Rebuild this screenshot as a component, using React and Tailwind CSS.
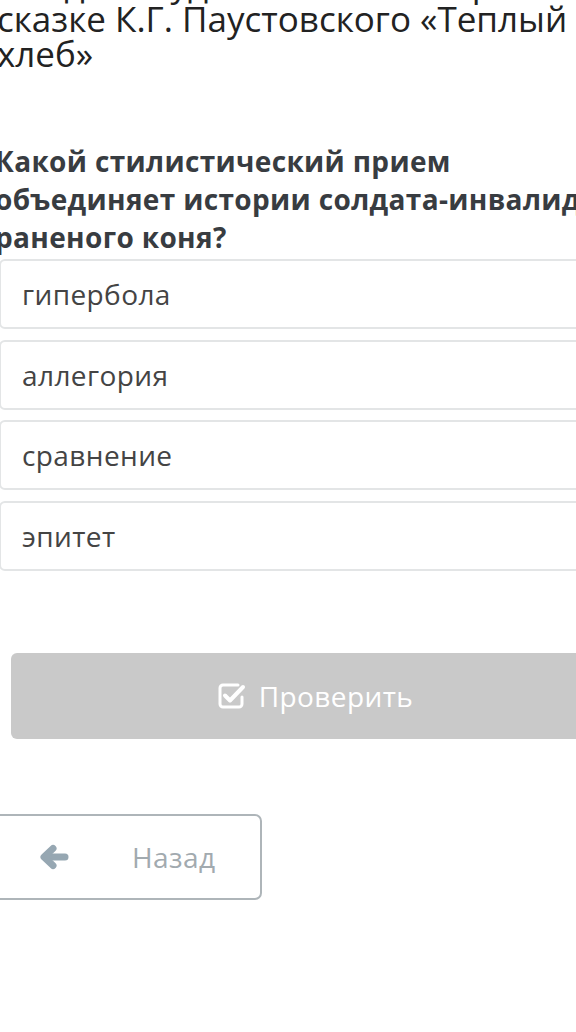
import React from "react";

function CheckSquare() {
  return (
    <svg width="29" height="28" viewBox="0 0 29 28" fill="none">
      <path
        d="M21 3H6a3 3 0 0 0-3 3v16a3 3 0 0 0 3 3h16a3 3 0 0 0 3-3V15"
        stroke="white"
        strokeWidth="3"
        strokeLinecap="round"
        strokeLinejoin="round"
      />
      <path
        d="M8 13.5l5 5L26 5"
        stroke="white"
        strokeWidth="4"
        strokeLinecap="round"
        strokeLinejoin="round"
      />
    </svg>
  );
}

function ArrowLeft() {
  return (
    <svg width="30" height="26" viewBox="0 0 30 26" fill="none">
      <path d="M26 13H7" stroke="#96a7b2" strokeWidth="7" strokeLinecap="round" />
      <path
        d="M14 4.5L5 13l9 8.5"
        stroke="#96a7b2"
        strokeWidth="7"
        strokeLinecap="round"
        strokeLinejoin="round"
      />
    </svg>
  );
}

export default function App() {
  const options = ["гипербола", "аллегория", "сравнение", "эпитет"];
  return (
    <div
      className="w-[576px] h-[1032px] overflow-hidden bg-white"
      style={{ fontFamily: '"Open Sans", "Noto Sans", sans-serif' }}
    >
      <div className="ml-[-3px] w-[700px]">
        <div className="mt-[-34px] text-[35px] leading-[35px] text-[#222] whitespace-nowrap">
          <div>Найдите художественный прием в рассказе</div>
          <div>сказке К.Г. Паустовского «Теплый</div>
          <div>хлеб»</div>
        </div>
        <div className="mt-[71px] ml-[-2px] text-[28px] leading-[38px] tracking-[0.35px] font-bold text-[#383c41] whitespace-nowrap">
          <div>Какой стилистический прием</div>
          <div>объединяет истории солдата-инвалида и</div>
          <div>раненого коня?</div>
        </div>
        <div className="mt-[3px] ml-[2px] flex flex-col gap-[10.5px]">
          {options.map((o) => (
            <div
              key={o}
              className="h-[70px] w-[640px] rounded-[6px] border-2 border-[#e3e5e6] flex items-center pl-[21px] text-[28px] tracking-[0.4px] text-[#444]"
            >
              {o}
            </div>
          ))}
        </div>
        <div className="mt-[82px] ml-[14px] w-[608px] h-[86px] rounded-[6px] bg-[#c9c9c9] flex items-center justify-center gap-[13px] text-white text-[28px] tracking-[0.4px]">
          <CheckSquare />
          <span>Проверить</span>
        </div>
        <div className="mt-[75px] ml-[-20px] w-[285px] h-[86px] rounded-[7px] border-2 border-[#aeb5b9] flex items-center">
          <div className="ml-[60px]">
            <ArrowLeft />
          </div>
          <span className="ml-[63px] text-[28px] tracking-[0.4px] text-[#a2aaaf]">Назад</span>
        </div>
      </div>
    </div>
  );
}
